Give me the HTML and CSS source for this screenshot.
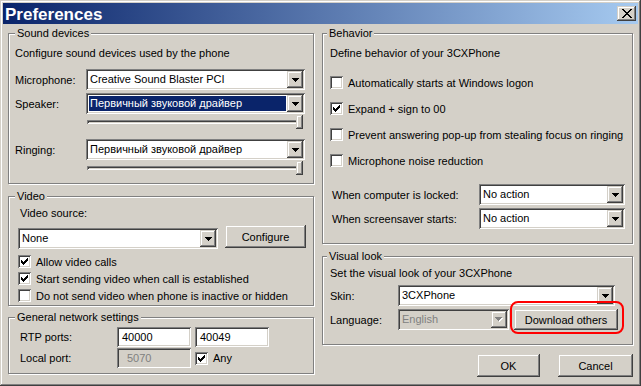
FILE: index.html
```html
<!DOCTYPE html>
<html lang="en">
<head>
    <meta charset="UTF-8">
    <title>Preferences</title>
    <link rel="stylesheet" href="styles.css">
</head>
<body>
    <div class="window">
        <div class="titlebar">
            <span class="title">Preferences</span>
            <button class="close-btn" aria-label="Close">
                <svg width="10" height="9" viewBox="0 0 10 9"><path d="M0 0h2v1H0zM8 0h2v1H8zM1 1h2v1H1zM7 1h2v1H7zM2 2h2v1H2zM6 2h2v1H6zM3 3h4v1H3zM4 4h2v1H4zM3 5h4v1H3zM2 6h2v1H2zM6 6h2v1H6zM1 7h2v1H1zM7 7h2v1H7zM0 8h2v1H0zM8 8h2v1H8z"/></svg>
            </button>
        </div>

        <div class="dialog-body">
            <div class="column column-left">
                <!-- Sound devices -->
                <fieldset class="group group-left sound-group">
                    <legend>Sound devices</legend>
                    <div class="group-body">
                        <div class="hint">Configure sound devices used by the phone</div>
                        <div class="field-row first-row">
                            <span class="field-label">Microphone:</span>
                            <div class="combo">
                                <span class="combo-value">Creative Sound Blaster PCI</span>
                                <span class="combo-arrow"><svg width="7" height="4" viewBox="0 0 7 4"><path d="M0 0h7v1H0zM1 1h5v1H1zM2 2h3v1H2zM3 3h1v1H3z"/></svg></span>
                            </div>
                        </div>
                        <div class="field-row">
                            <span class="field-label">Speaker:</span>
                            <div class="combo">
                                <span class="combo-value selected">Первичный звуковой драйвер</span>
                                <span class="combo-arrow"><svg width="7" height="4" viewBox="0 0 7 4"><path d="M0 0h7v1H0zM1 1h5v1H1zM2 2h3v1H2zM3 3h1v1H3z"/></svg></span>
                            </div>
                        </div>
                        <div class="slider">
                            <span class="slider-track"></span>
                            <span class="slider-thumb"></span>
                        </div>
                        <div class="field-row ringing-row">
                            <span class="field-label">Ringing:</span>
                            <div class="combo">
                                <span class="combo-value">Первичный звуковой драйвер</span>
                                <span class="combo-arrow"><svg width="7" height="4" viewBox="0 0 7 4"><path d="M0 0h7v1H0zM1 1h5v1H1zM2 2h3v1H2zM3 3h1v1H3z"/></svg></span>
                            </div>
                        </div>
                        <div class="slider">
                            <span class="slider-track"></span>
                            <span class="slider-thumb"></span>
                        </div>
                    </div>
                </fieldset>

                <!-- Video -->
                <fieldset class="group group-left video-group">
                    <legend>Video</legend>
                    <div class="group-body">
                        <div class="caption">Video source:</div>
                        <div class="source-row">
                            <div class="combo source-combo">
                                <span class="combo-value">None</span>
                                <span class="combo-arrow"><svg width="7" height="4" viewBox="0 0 7 4"><path d="M0 0h7v1H0zM1 1h5v1H1zM2 2h3v1H2zM3 3h1v1H3z"/></svg></span>
                            </div>
                            <button class="btn configure-btn">Configure</button>
                        </div>
                        <div class="check-row first-check">
                            <span class="checkbox"><svg width="7" height="7" viewBox="0 0 7 7"><path d="M0 2h1v3H0zm1 1h1v3H1zm1 1h1v3H2zm1-1h1v3H3zm1-1h1v3H4zm1-1h1v3H5zm1-1h1v3H6z"/></svg></span>
                            Allow video calls
                        </div>
                        <div class="check-row">
                            <span class="checkbox"><svg width="7" height="7" viewBox="0 0 7 7"><path d="M0 2h1v3H0zm1 1h1v3H1zm1 1h1v3H2zm1-1h1v3H3zm1-1h1v3H4zm1-1h1v3H5zm1-1h1v3H6z"/></svg></span>
                            Start sending video when call is established
                        </div>
                        <div class="check-row">
                            <span class="checkbox"></span>
                            Do not send video when phone is inactive or hidden
                        </div>
                    </div>
                </fieldset>

                <!-- General network settings -->
                <fieldset class="group group-left network-group">
                    <legend>General network settings</legend>
                    <div class="group-body">
                        <div class="net-row">
                            <span class="net-label">RTP ports:</span>
                            <span class="edit">40000</span>
                            <span class="edit">40049</span>
                        </div>
                        <div class="net-row">
                            <span class="net-label">Local port:</span>
                            <span class="edit disabled">5070</span>
                            <div class="check-row">
                                <span class="checkbox"><svg width="7" height="7" viewBox="0 0 7 7"><path d="M0 2h1v3H0zm1 1h1v3H1zm1 1h1v3H2zm1-1h1v3H3zm1-1h1v3H4zm1-1h1v3H5zm1-1h1v3H6z"/></svg></span>
                                Any
                            </div>
                        </div>
                    </div>
                </fieldset>
            </div>

            <div class="column column-right">
                <!-- Behavior -->
                <fieldset class="group group-right behavior-group">
                    <legend>Behavior</legend>
                    <div class="group-body">
                        <div class="hint">Define behavior of your 3CXPhone</div>
                        <div class="check-row first-check">
                            <span class="checkbox"></span>
                            Automatically starts at Windows logon
                        </div>
                        <div class="check-row">
                            <span class="checkbox"><svg width="7" height="7" viewBox="0 0 7 7"><path d="M0 2h1v3H0zm1 1h1v3H1zm1 1h1v3H2zm1-1h1v3H3zm1-1h1v3H4zm1-1h1v3H5zm1-1h1v3H6z"/></svg></span>
                            Expand + sign to 00
                        </div>
                        <div class="check-row">
                            <span class="checkbox"></span>
                            Prevent answering pop-up from stealing focus on ringing
                        </div>
                        <div class="check-row">
                            <span class="checkbox"></span>
                            Microphone noise reduction
                        </div>
                        <div class="field-row first-row">
                            <span class="field-label">When computer is locked:</span>
                            <div class="combo">
                                <span class="combo-value">No action</span>
                                <span class="combo-arrow"><svg width="7" height="4" viewBox="0 0 7 4"><path d="M0 0h7v1H0zM1 1h5v1H1zM2 2h3v1H2zM3 3h1v1H3z"/></svg></span>
                            </div>
                        </div>
                        <div class="field-row">
                            <span class="field-label">When screensaver starts:</span>
                            <div class="combo">
                                <span class="combo-value">No action</span>
                                <span class="combo-arrow"><svg width="7" height="4" viewBox="0 0 7 4"><path d="M0 0h7v1H0zM1 1h5v1H1zM2 2h3v1H2zM3 3h1v1H3z"/></svg></span>
                            </div>
                        </div>
                    </div>
                </fieldset>

                <!-- Visual look -->
                <fieldset class="group group-right visual-group">
                    <legend>Visual look</legend>
                    <div class="group-body">
                        <div class="hint">Set the visual look of your 3CXPhone</div>
                        <div class="field-row first-row">
                            <span class="field-label">Skin:</span>
                            <div class="combo skin-combo">
                                <span class="combo-value">3CXPhone</span>
                                <span class="combo-arrow"><svg width="7" height="4" viewBox="0 0 7 4"><path d="M0 0h7v1H0zM1 1h5v1H1zM2 2h3v1H2zM3 3h1v1H3z"/></svg></span>
                            </div>
                        </div>
                        <div class="field-row">
                            <span class="field-label">Language:</span>
                            <div class="combo disabled lang-combo">
                                <span class="combo-value">English</span>
                                <span class="combo-arrow"><svg width="8" height="5" viewBox="0 0 8 5"><path fill="#fff" d="M1 1h7v1H1zM2 2h5v1H2zM3 3h3v1H3zM4 4h1v1H4z"/><path fill="#808080" d="M0 0h7v1H0zM1 1h5v1H1zM2 2h3v1H2zM3 3h1v1H3z"/></svg></span>
                            </div>
                            <span class="highlight">
                                <button class="btn download-btn">Download others</button>
                            </span>
                        </div>
                    </div>
                </fieldset>

                <div class="dialog-buttons">
                    <button class="btn ok-btn">OK</button>
                    <button class="btn cancel-btn">Cancel</button>
                </div>
            </div>
        </div>
    </div>
</body>
</html>
```

FILE: styles.css
```css
* {
    box-sizing: border-box;
}
body {
    margin: 0;
    background: #d4d0c8;
    font-family: "Liberation Sans", Arial, sans-serif;
    font-size: 11px;
    color: #000;
}

/* window frame */
.window {
    width: 641px;
    height: 386px;
    padding: 3px;
    background: #d4d0c8;
    box-shadow: inset -1px -1px #404040, inset 1px 1px #d4d0c8, inset -2px -2px #808080, inset 2px 2px #fff;
}
.titlebar {
    display: flex;
    align-items: center;
    justify-content: space-between;
    height: 21px;
    padding-left: 2px;
    background: linear-gradient(to right, #0a246a, #a6caf0);
}
.title {
    color: #fff;
    font-weight: bold;
    font-size: 17px;
    line-height: 21px;
    padding-top: 1px;
}
.close-btn {
    display: flex;
    align-items: center;
    justify-content: center;
    width: 19px;
    height: 15px;
    margin-right: 2px;
    padding: 0;
    border: none;
}

/* 3d edges */
.btn, .close-btn, .combo-arrow, .slider-thumb {
    background: #d4d0c8;
    box-shadow: inset -1px -1px #404040, inset 1px 1px #d4d0c8, inset -2px -2px #808080, inset 2px 2px #fff;
}
.combo, .edit, .checkbox, .slider-track {
    box-shadow: inset 1px 1px #808080, inset -1px -1px #fff, inset 2px 2px #404040, inset -2px -2px #d4d0c8;
}

.btn {
    border: none;
    padding: 0;
    font-family: inherit;
    font-size: 11px;
    color: #000;
}

/* layout */
.dialog-body {
    display: flex;
    gap: 8px;
    padding: 3px 5px 0 5px;
}
.column {
    display: flex;
    flex-direction: column;
}
.column-left {
    width: 306px;
}
.column-right {
    width: 311px;
}

.group {
    margin: 0;
    padding: 0;
    min-width: 0;
    border: 1px solid #808080;
    box-shadow: inset 1px 1px #fff, 1px 1px #fff;
}
.group legend {
    padding: 0 2px;
    line-height: 13px;
    background: #d4d0c8;
}
.group-left legend {
    margin-left: 6px;
}
.group-right legend {
    margin-left: 4px;
}

.sound-group .group-body {
    padding: 7px 8px 8px 6px;
}
.video-group {
    margin-top: 6px;
}
.video-group .group-body {
    padding: 4px 7px 1px 9px;
}
.network-group {
    margin-top: 5px;
}
.network-group .group-body {
    padding: 3px 7px 5px 9px;
}
.behavior-group .group-body {
    padding: 7px 7px 14px 7px;
}
.visual-group {
    margin-top: 6px;
}
.visual-group .group-body {
    padding: 4px 7px 14px 7px;
}

.hint, .caption {
    line-height: 13px;
    white-space: nowrap;
}
.caption {
    padding-left: 2px;
}

/* label + combo rows */
.field-row {
    display: flex;
    align-items: center;
    height: 21px;
    margin-top: 3px;
}
.field-label {
    flex: none;
    white-space: nowrap;
}
.sound-group .field-row.first-row {
    margin-top: 9px;
}
.sound-group .field-label {
    width: 71px;
}
.sound-group .ringing-row {
    margin-top: 10px;
}
.behavior-group .field-row.first-row {
    margin-top: 15px;
}
.behavior-group .field-label {
    width: 149px;
    padding-left: 2px;
}
.visual-group .field-row.first-row {
    margin-top: 5px;
}
.visual-group .field-label {
    width: 68px;
}

.combo {
    display: flex;
    flex: 1;
    height: 21px;
    padding: 2px;
    background: #fff;
}
.combo-value {
    flex: 1;
    padding-left: 2px;
    line-height: 17px;
    white-space: nowrap;
    overflow: hidden;
}
.combo-value.selected {
    margin: 1px;
    padding-left: 1px;
    line-height: 15px;
    background: #0a246a;
    color: #fff;
}
.combo-arrow {
    display: flex;
    align-items: center;
    justify-content: center;
    width: 16px;
    flex: none;
}
.combo-arrow svg {
    display: block;
}
.combo.disabled {
    background: #d4d0c8;
}
.combo.disabled .combo-value {
    color: #808080;
}
.skin-combo {
    flex: none;
    width: 217px;
}
.lang-combo {
    flex: none;
    width: 111px;
}

/* trackbar */
.slider {
    display: flex;
    align-items: center;
    height: 14px;
    margin: 1px 2px 0 72px;
}
.slider-track {
    flex: 1;
    height: 4px;
    background: #d4d0c8;
}
.slider-thumb {
    width: 7px;
    height: 14px;
    margin-left: -2px;
}

/* video */
.source-row {
    display: flex;
    align-items: flex-start;
    gap: 7px;
    height: 23px;
    margin-top: 5px;
}
.source-combo {
    flex: none;
    width: 200px;
    margin-top: 3px;
}
.configure-btn {
    width: 81px;
    height: 23px;
}

/* checkboxes */
.check-row {
    display: flex;
    align-items: center;
    gap: 5px;
    height: 17px;
    white-space: nowrap;
}
.checkbox {
    display: flex;
    align-items: center;
    justify-content: center;
    flex: none;
    width: 13px;
    height: 13px;
    background: #fff;
}
.checkbox svg {
    display: block;
}
.video-group .first-check {
    margin-top: 5px;
}
.behavior-group .check-row {
    margin-top: 9px;
}
.behavior-group .first-check {
    margin-top: 14px;
}

/* network */
.net-row {
    display: flex;
    align-items: center;
    gap: 4px;
    height: 20px;
}
.net-row + .net-row {
    margin-top: 1px;
}
.net-label {
    width: 95px;
    padding-left: 2px;
    white-space: nowrap;
}
.edit {
    width: 74px;
    height: 20px;
    padding-left: 5px;
    line-height: 20px;
    background: #fff;
}
.edit.disabled {
    padding-left: 10px;
    background: #d4d0c8;
    color: #808080;
}

/* visual look */
.highlight {
    position: relative;
    margin-left: 5px;
}
.highlight::after {
    content: "";
    position: absolute;
    top: -8px;
    right: -6px;
    bottom: -4px;
    left: -4px;
    border: 2px solid #f00;
    border-radius: 8px;
}
.download-btn {
    display: block;
    width: 104px;
    height: 21px;
}

.dialog-buttons {
    display: flex;
    justify-content: flex-end;
    gap: 18px;
    margin-top: 9px;
}
.ok-btn {
    width: 63px;
    height: 23px;
}
.cancel-btn {
    width: 75px;
    height: 23px;
}
```
